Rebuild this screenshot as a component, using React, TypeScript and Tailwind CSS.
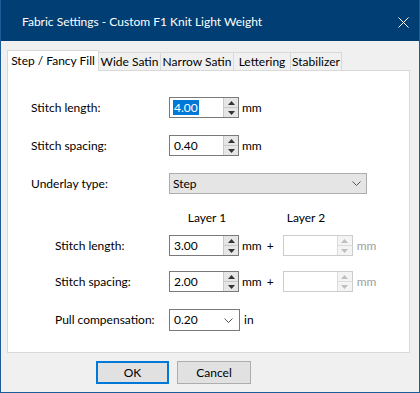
import React from "react";

function Spinner({ disabled }: { disabled?: boolean }) {
  const arrow = disabled ? "#bfbfbf" : "#333333";
  const bg = disabled ? "bg-[#f4f4f4]" : "bg-[#e6e6e6]";
  return (
    <div className={`flex flex-col w-[15px] h-full border-l ${disabled ? "border-[#dcdcdc]" : "border-[#c8c8c8]"}`}>
      <div className={`flex-1 flex items-center justify-center ${bg} border-b ${disabled ? "border-[#dcdcdc]" : "border-[#c8c8c8]"}`}>
        <svg width="7" height="4" viewBox="0 0 7 4">
          <path d="M0 4 L3.5 0 L7 4 Z" fill={arrow} />
        </svg>
      </div>
      <div className={`flex-1 flex items-center justify-center ${bg}`}>
        <svg width="7" height="4" viewBox="0 0 7 4">
          <path d="M0 0 L3.5 4 L7 0 Z" fill={arrow} />
        </svg>
      </div>
    </div>
  );
}

function SpinBox({ value, disabled, selected }: { value?: string; disabled?: boolean; selected?: boolean }) {
  return (
    <div
      className={`flex w-[70px] h-[21px] bg-white border ${
        disabled ? "border-[#cccccc]" : "border-[#7a7a7a]"
      }`}
    >
      <div className="flex-1 flex items-center pl-[3px]">
        {selected ? (
          <span className="bg-[#0078d7] text-white leading-[15px] px-px">{value}</span>
        ) : (
          <span className="pl-px">{value}</span>
        )}
      </div>
      <Spinner disabled={disabled} />
    </div>
  );
}

function Chevron() {
  return (
    <svg width="9" height="5" viewBox="0 0 9 5">
      <path d="M0.5 0.5 L4.5 4.5 L8.5 0.5" fill="none" stroke="#555555" strokeWidth="1" />
    </svg>
  );
}

export default function App() {
  const tabs = ["Wide Satin", "Narrow Satin", "Lettering", "Stabilizer"];
  const tabWidths = ["w-[63px]", "w-[74px]", "w-[58px]", "w-[52px]"];

  return (
    <div className="w-[420px] h-[393px] bg-[#f0f0f0] border-x border-b border-[#1d5c96] flex flex-col text-[12px] text-black font-['Lato',sans-serif] overflow-hidden">
      {/* Title bar */}
      <div className="h-[41px] -mx-px bg-[#003e73] flex items-center justify-between pt-[3px] pl-[22px] pr-[11px] text-white">
        <span className="text-[12px]">Fabric Settings - Custom F1 Knit Light Weight</span>
        <svg width="11" height="11" viewBox="0 0 11 11">
          <path d="M0.5 0.5 L10.5 10.5 M10.5 0.5 L0.5 10.5" stroke="#ffffff" strokeWidth="1" />
        </svg>
      </div>

      {/* Tabs */}
      <div className="pl-[6px] pr-[9px] pt-[9px]">
        <div className="flex items-end h-[20px] relative z-10 whitespace-nowrap">
          <div className="w-[92px] h-[21px] -mb-px bg-white border border-b-0 border-[#d9d9d9] flex items-center justify-center pb-[1px]">
            Step / Fancy Fill
          </div>
          {tabs.map((t, i) => (
            <div
              key={t}
              className={`${tabWidths[i]} -ml-px h-[18px] border border-b-0 border-[#d9d9d9] flex items-center justify-center`}
            >
              {t}
            </div>
          ))}
        </div>

        {/* Panel */}
        <div className="h-[283px] bg-white border border-[#d9d9d9] pt-[26px] pl-[23px]">
          <div className="flex items-center">
            <div className="w-[138px]">Stitch length:</div>
            <SpinBox value="4.00" selected />
            <span className="ml-[3px]">mm</span>
          </div>

          <div className="flex items-center mt-[17px]">
            <div className="w-[138px]">Stitch spacing:</div>
            <SpinBox value="0.40" />
            <span className="ml-[3px]">mm</span>
          </div>

          <div className="flex items-center mt-[17px]">
            <div className="w-[138px]">Underlay type:</div>
            <div className="w-[198px] h-[21px] bg-[#e5e5e5] border border-[#adadad] flex items-center justify-between pl-[3px] pr-[5px]">
              <span>Step</span>
              <Chevron />
            </div>
          </div>

          <div className="flex items-center mt-[15px] h-[17px]">
            <div className="w-[138px]" />
            <div className="w-[76px] text-center">Layer 1</div>
            <div className="w-[36px]" />
            <div className="w-[50px] text-center">Layer 2</div>
          </div>

          <div className="pl-[24px]">
            <div className="flex items-center mt-[9px]">
              <div className="w-[114px]">Stitch length:</div>
              <SpinBox value="3.00" />
              <span className="ml-[3px]">mm</span>
              <span className="ml-[5px] w-[16px]">+</span>
              <SpinBox disabled />
              <span className="ml-[4px] text-[#a0a0a0]">mm</span>
            </div>

            <div className="flex items-center mt-[15px]">
              <div className="w-[114px]">Stitch spacing:</div>
              <SpinBox value="2.00" />
              <span className="ml-[3px]">mm</span>
              <span className="ml-[5px] w-[16px]">+</span>
              <SpinBox disabled />
              <span className="ml-[4px] text-[#a0a0a0]">mm</span>
            </div>

            <div className="flex items-center mt-[17px]">
              <div className="w-[114px]">Pull compensation:</div>
              <div className="w-[71px] h-[22px] bg-white border border-[#7a7a7a] flex items-center justify-between pl-[4px] pr-[6px]">
                <span>0.20</span>
                <Chevron />
              </div>
              <span className="ml-[4px]">in</span>
            </div>
          </div>
        </div>
      </div>

      {/* Buttons */}
      <div className="flex gap-[8px] pl-[95px] mt-[8px]">
        <button className="w-[73px] h-[23px] bg-[#e1e1e1] border-2 border-[#0078d7] flex items-center justify-center">
          OK
        </button>
        <button className="w-[74px] h-[23px] bg-[#e1e1e1] border border-[#adadad] flex items-center justify-center">
          Cancel
        </button>
      </div>
    </div>
  );
}
